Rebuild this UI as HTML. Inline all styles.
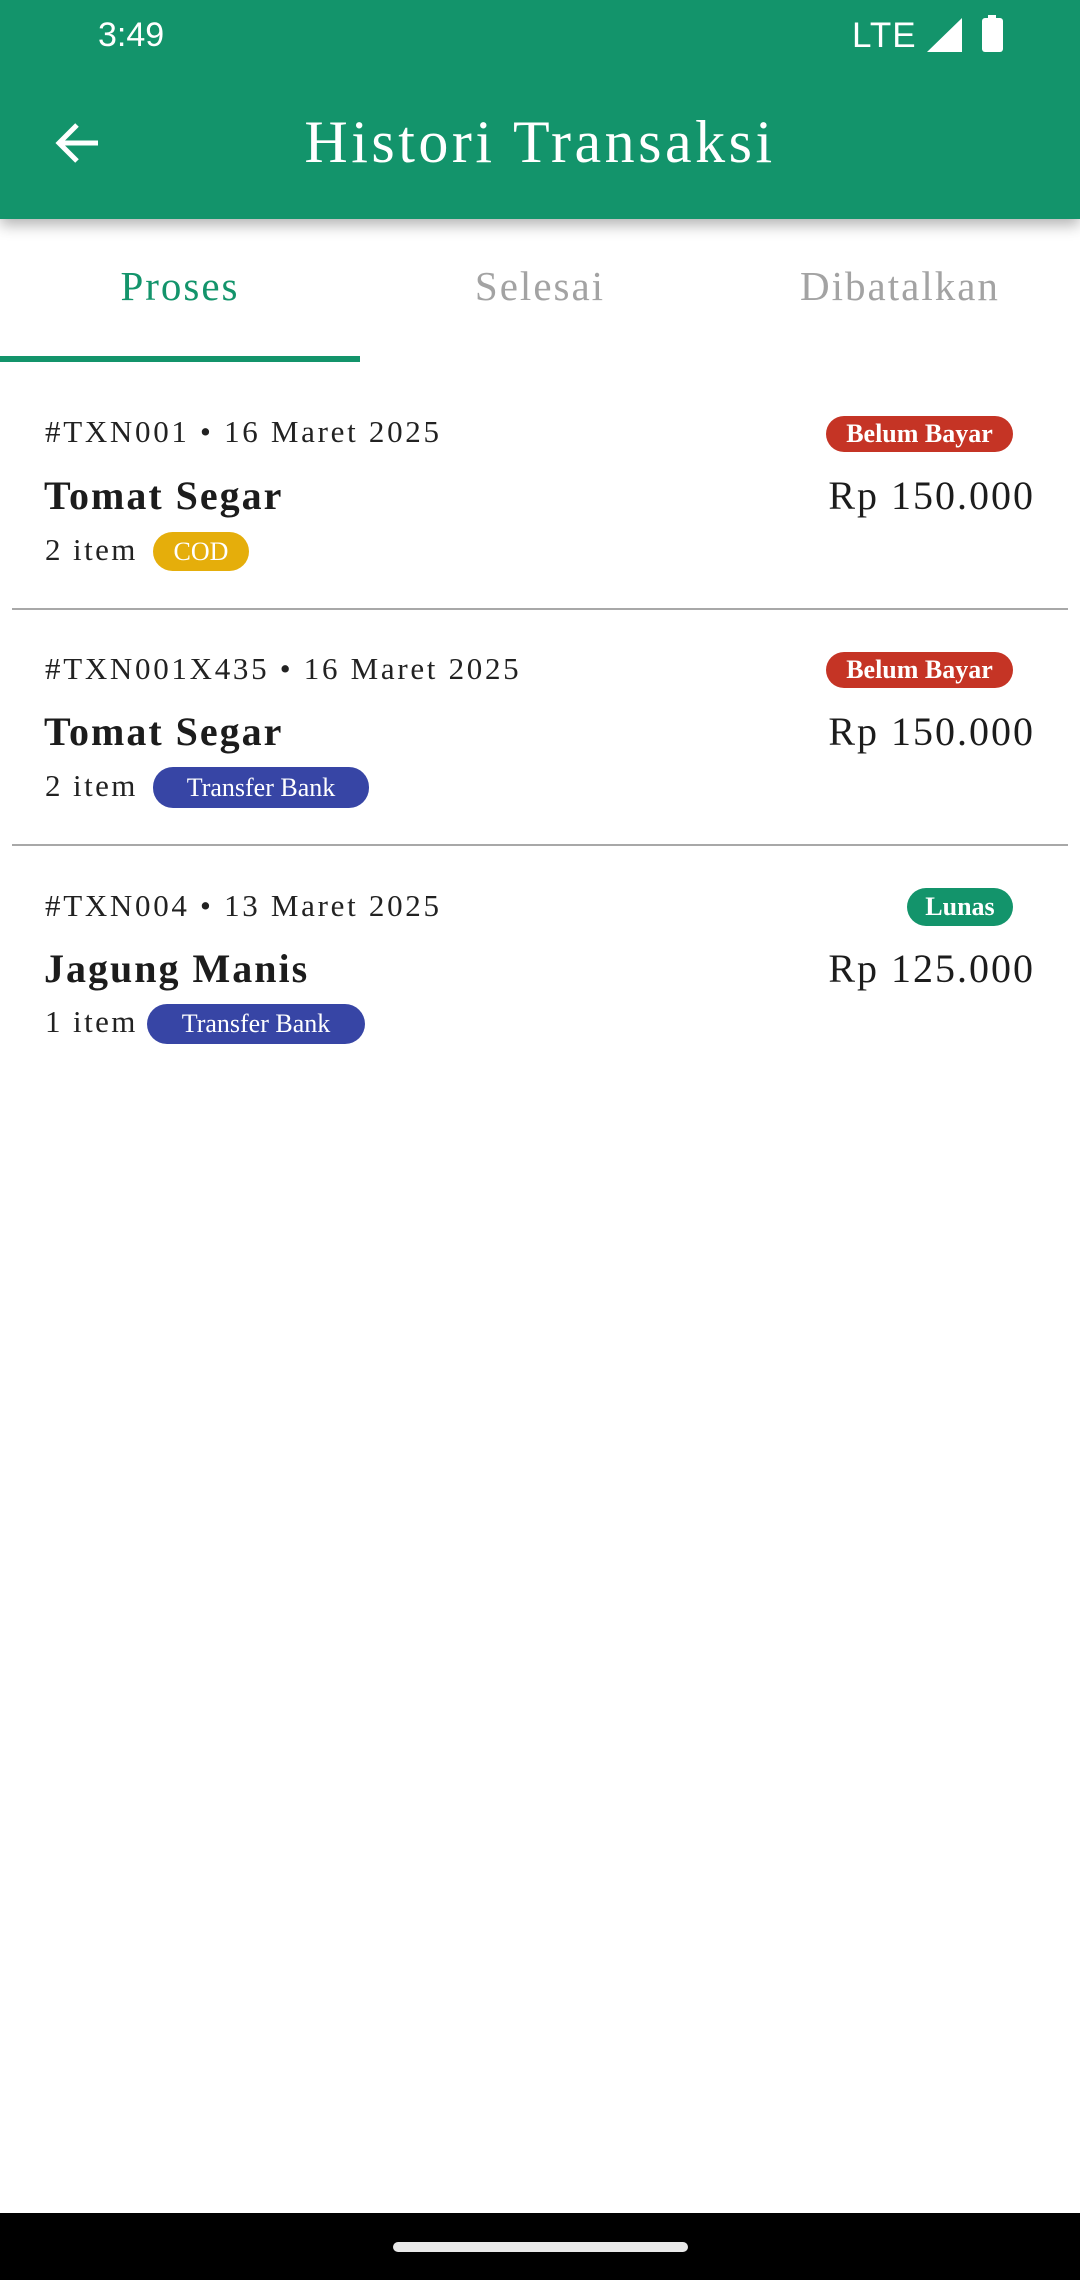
<!DOCTYPE html>
<html><head><meta charset="utf-8"><style>
*{margin:0;padding:0;box-sizing:border-box}
body{width:1080px;height:2280px;position:relative;background:#fff;font-family:"Liberation Serif",serif;overflow:hidden;color:#1c1c1c}
.abs{position:absolute;white-space:nowrap}
.bar{position:absolute;left:0;top:0;width:1080px;height:219px;background:#13946b;box-shadow:0 6px 14px rgba(0,0,0,0.3);z-index:2}
.chip{position:absolute;border-radius:20px;color:#fff;font-size:26px;text-align:center;white-space:nowrap}
.meta{font-size:31px;color:#222;letter-spacing:2.7px}
.title{font-size:40px;font-weight:bold;color:#1c1c1c;letter-spacing:2px}
.price{font-size:40px;color:#1c1c1c;text-align:right;right:45px;letter-spacing:2px}
.item{font-size:31px;color:#222;letter-spacing:2.4px}
.div{position:absolute;left:12px;width:1056px;height:2px;background:#a8a8a8}
.tab{font-size:41px;letter-spacing:2px;top:262px;width:360px;text-align:center}
</style></head><body>
<div class="bar">
  <div class="abs" style="left:98px;top:16px;font-family:'Liberation Sans',sans-serif;font-size:34px;color:#fff">3:49</div>
  <div class="abs" style="left:852px;top:16px;font-family:'Liberation Sans',sans-serif;font-size:35px;color:#fff;letter-spacing:1px">LTE</div>
  <svg class="abs" style="left:926px;top:17px" width="38" height="36"><polygon points="36,1 36,35 1,35" fill="#fff"/></svg>
  <svg class="abs" style="left:981px;top:15px" width="24" height="38"><rect x="7" y="0" width="8" height="4" fill="#fff"/><rect x="1" y="3" width="21" height="34" rx="3" fill="#fff"/></svg>
  <svg class="abs" style="left:52px;top:120px" width="50" height="46" viewBox="0 0 50 46"><path d="M46 23H8M25 5L7 23L25 41" stroke="#fff" stroke-width="5" fill="none"/></svg>
  <div class="abs" style="left:0;width:1080px;text-align:center;top:108px;font-size:60px;color:#fff;letter-spacing:3.5px">Histori Transaksi</div>
</div>
<div class="abs tab" style="left:0;color:#13946b">Proses</div>
<div class="abs tab" style="left:360px;color:#a3a3a3">Selesai</div>
<div class="abs tab" style="left:720px;color:#a3a3a3">Dibatalkan</div>
<div class="abs" style="left:0;top:356px;width:360px;height:6px;background:#13946b"></div>

<div class="abs meta" style="left:45px;top:414px">#TXN001 • 16 Maret 2025</div>
<div class="chip" style="left:826px;top:416px;width:187px;height:36px;line-height:36px;background:#c53425;font-weight:bold">Belum Bayar</div>
<div class="abs title" style="left:44px;top:472px">Tomat Segar</div>
<div class="abs price" style="top:472px">Rp 150.000</div>
<div class="abs item" style="left:45px;top:532px">2 item</div>
<div class="chip" style="left:153px;top:532px;width:96px;height:39px;line-height:39px;background:#e5ae0b">COD</div>
<div class="div" style="top:608px"></div>

<div class="abs meta" style="left:45px;top:651px">#TXN001X435 • 16 Maret 2025</div>
<div class="chip" style="left:826px;top:652px;width:187px;height:36px;line-height:36px;background:#c53425;font-weight:bold">Belum Bayar</div>
<div class="abs title" style="left:44px;top:708px">Tomat Segar</div>
<div class="abs price" style="top:708px">Rp 150.000</div>
<div class="abs item" style="left:45px;top:768px">2 item</div>
<div class="chip" style="left:153px;top:767px;width:216px;height:41px;line-height:41px;background:#3745a5">Transfer Bank</div>
<div class="div" style="top:844px"></div>

<div class="abs meta" style="left:45px;top:888px">#TXN004 • 13 Maret 2025</div>
<div class="chip" style="left:907px;top:888px;width:106px;height:38px;line-height:38px;background:#13946b;font-weight:bold">Lunas</div>
<div class="abs title" style="left:44px;top:945px">Jagung Manis</div>
<div class="abs price" style="top:945px">Rp 125.000</div>
<div class="abs item" style="left:45px;top:1004px">1 item</div>
<div class="chip" style="left:147px;top:1004px;width:218px;height:40px;line-height:40px;background:#3745a5">Transfer Bank</div>

<div class="abs" style="left:0;top:2213px;width:1080px;height:67px;background:#000"></div>
<div class="abs" style="left:393px;top:2242px;width:295px;height:10px;border-radius:5px;background:#e8e8e8"></div>
</body></html>
